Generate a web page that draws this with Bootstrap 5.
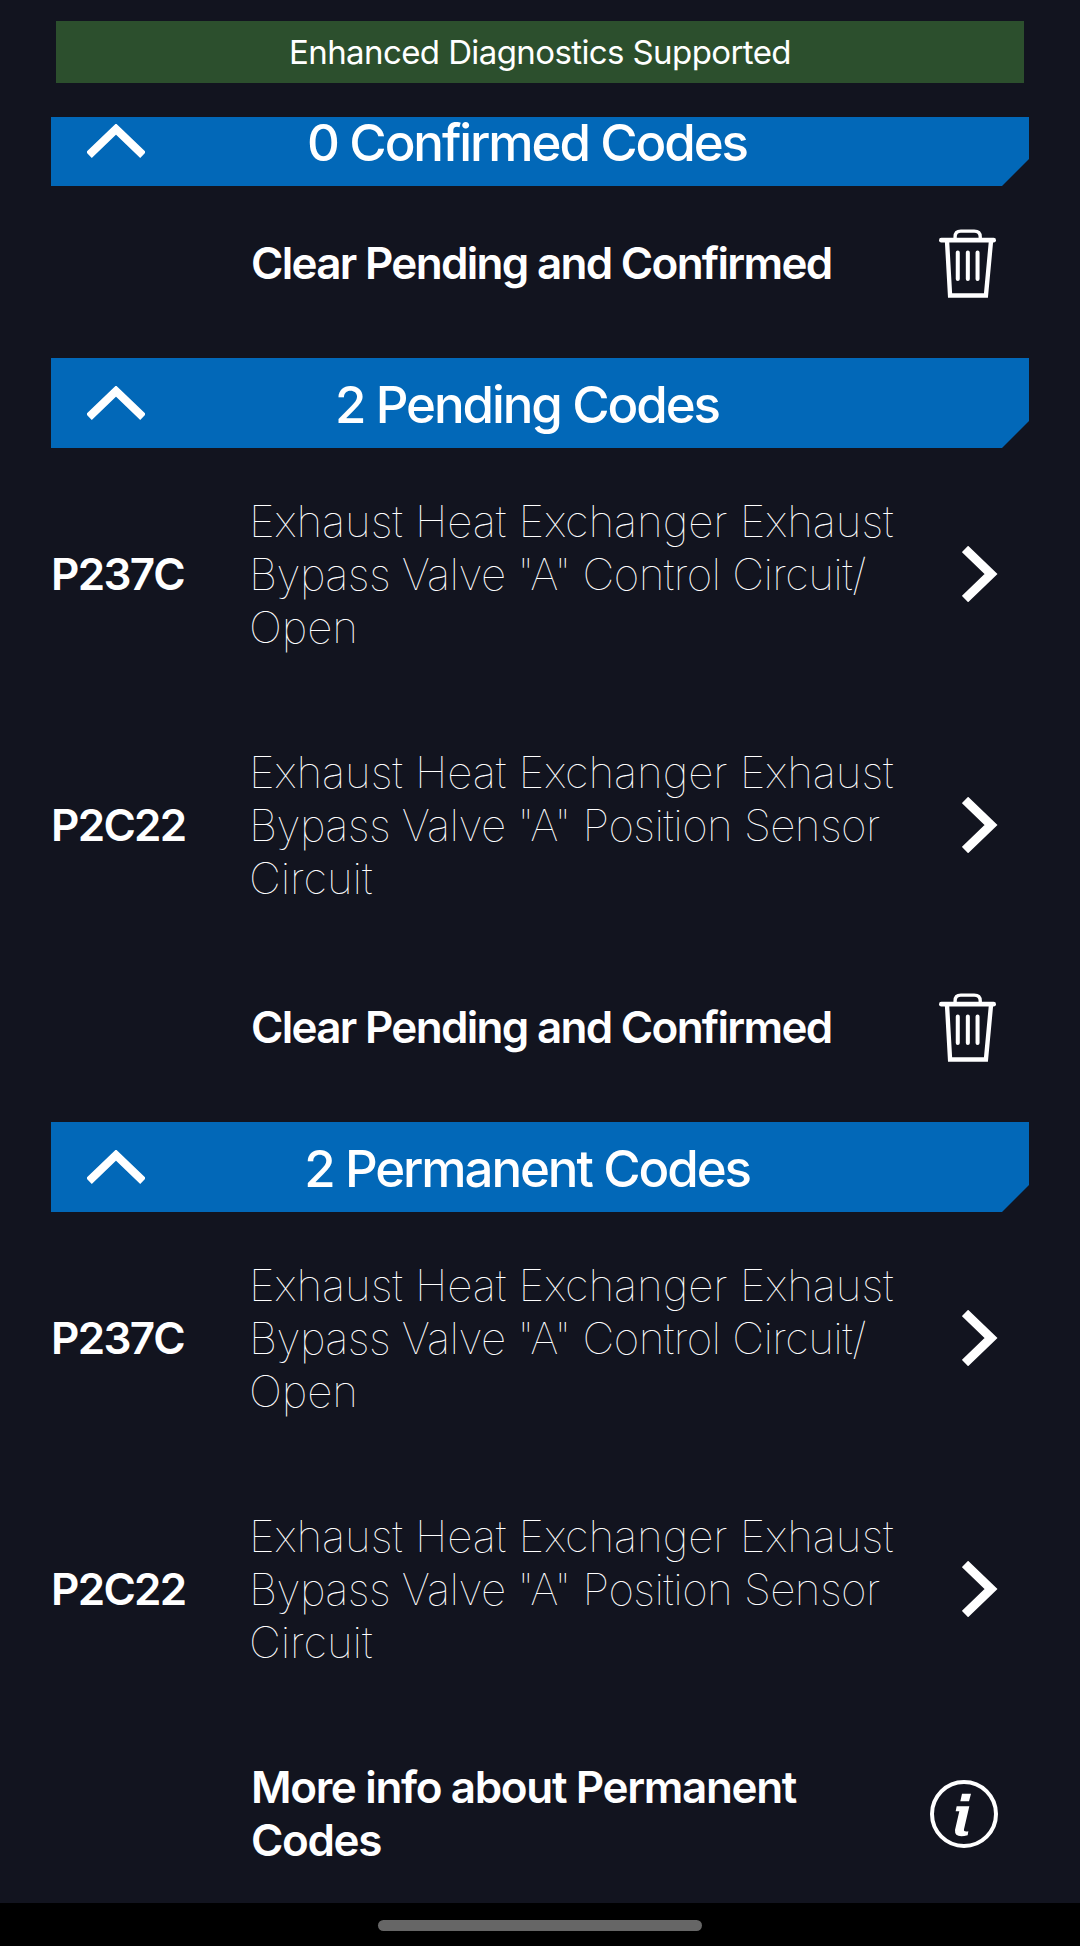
<!DOCTYPE html>
<html lang="en">
<head>
  <meta charset="UTF-8" />
  <meta name="viewport" content="width=device-width, initial-scale=1" />
  <title>Trouble Codes</title>
  <link href="https://cdn.jsdelivr.net/npm/bootstrap@5.3.0/dist/css/bootstrap.min.css" rel="stylesheet" />
  <style>
    body {
      background: #12141f;
      color: #fff;
      font-family: Inter, Roboto, "Liberation Sans", sans-serif;
      height: 1946px;
      overflow: hidden;
    }
    .screen-body {
      height: 1903px;
      padding-top: 21px;
      overflow: hidden;
    }
    .status-banner {
      background: #2c4f2d;
      height: 62px;
      margin: 0 56px 34px;
      padding-top: 2px;
      font-size: 33px;
      font-weight: 400;
      letter-spacing: -0.6px;
    }
    .section-band {
      background: #0268b8;
      height: 90px;
      margin: 0 51px;
      padding: 0 120px 0 36px;
      clip-path: polygon(0 0, 100% 0, 100% calc(100% - 27px), calc(100% - 27px) 100%, 0 100%);
    }
    /* first band is scrolled up under the banner */
    .section-band.band-clipped {
      height: 69px;
      padding-bottom: 21px;
    }
    .band-title {
      padding-top: 3px;
      font-size: 51px;
      font-weight: 550;
      line-height: 42px;
      letter-spacing: -2.1px;
    }
    .code-row {
      margin: 0 82px 0 51px;
      padding: 46px 0;
    }
    .code-name {
      width: 200px;
      font-size: 44px;
      font-weight: 600;
      letter-spacing: -1.7px;
    }
    .code-desc {
      width: 680px;
      padding-top: 1px;
      margin: 0 0 -1px -2px;
      font-size: 44px;
      font-weight: 100;
      line-height: 53px;
      letter-spacing: -0.1px;
    }
    .desc-tight {
      letter-spacing: -0.6px;
    }
    .action-row {
      margin: 0 82px 0 251px;
      font-size: 44px;
      font-weight: 600;
      line-height: 53px;
      letter-spacing: -1.7px;
    }
    .action-clear {
      height: 172px;
      padding-bottom: 18px;
    }
    .action-info {
      padding-top: 47px;
      letter-spacing: -1.35px;
    }
    .action-text {
      width: 600px;
    }
    .trash-icon {
      margin-right: 2px;
    }
    .home-bar {
      background: #000;
      height: 43px;
      padding-top: 17px;
    }
    .home-pill {
      background: #666;
      width: 324px;
      height: 11px;
      border-radius: 6px;
    }
  </style>
</head>
<body>
  <!-- shared icons -->
  <svg class="d-none">
    <defs>
      <g id="chevron-right">
        <polyline points="3,3 29,28 3,53" fill="none" stroke="#fff" stroke-width="9" />
      </g>
      <g id="chevron-up">
        <polyline points="2,31 29,5 56,31" fill="none" stroke="#fff" stroke-width="8" />
      </g>
      <g id="trash" fill="none" stroke="#fff">
        <path d="M165 84 V78 Q165 61 182 61 H222 Q240 61 240 78 V84" stroke-width="10" />
        <path d="M124 88 H280" stroke-width="14" stroke-linecap="round" />
        <path d="M141 92 L150 253 H257 L272 92" stroke-width="13" />
        <path d="M173 125 V204 M203 125 V204 M232 125 V204" stroke-width="12" stroke-linecap="round" />
      </g>
      <g id="info">
        <circle cx="192" cy="188" r="96" fill="none" stroke="#fff" stroke-width="12" />
        <path fill="#fff" d="M186 127 H213 L207 150 H181 Z M170 165 H208 L192 234 Q190 243 205 240 L203 252 Q163 262 165 236 L178 180 H167 Z" />
      </g>
    </defs>
  </svg>

  <div class="screen-body">
    <div class="status-banner d-flex align-items-center justify-content-center">Enhanced Diagnostics Supported</div>

    <div class="section-band band-clipped d-flex align-items-center">
      <svg width="58" height="34" viewBox="0 0 58 34"><use href="#chevron-up" /></svg>
      <div class="band-title flex-grow-1 text-center">0 Confirmed Codes</div>
    </div>
    <div class="action-row action-clear d-flex align-items-center">
      <div class="action-text">Clear Pending and Confirmed</div>
      <svg class="trash-icon ms-auto" width="57" height="69" viewBox="117 55 170 205"><use href="#trash" /></svg>
    </div>

    <div class="section-band d-flex align-items-center">
      <svg width="58" height="34" viewBox="0 0 58 34"><use href="#chevron-up" /></svg>
      <div class="band-title flex-grow-1 text-center">2 Pending Codes</div>
    </div>
    <div class="code-row d-flex align-items-center">
      <div class="code-name">P237C</div>
      <div class="code-desc">
        <div>Exhaust Heat Exchanger Exhaust</div>
        <div class="desc-tight">Bypass Valve "A" Control Circuit/</div>
        <div>Open</div>
      </div>
      <svg class="ms-auto" width="36" height="56" viewBox="0 0 36 56"><use href="#chevron-right" /></svg>
    </div>
    <div class="code-row d-flex align-items-center">
      <div class="code-name">P2C22</div>
      <div class="code-desc">
        <div>Exhaust Heat Exchanger Exhaust</div>
        <div class="desc-tight">Bypass Valve "A" Position Sensor</div>
        <div>Circuit</div>
      </div>
      <svg class="ms-auto" width="36" height="56" viewBox="0 0 36 56"><use href="#chevron-right" /></svg>
    </div>
    <div class="action-row action-clear d-flex align-items-center">
      <div class="action-text">Clear Pending and Confirmed</div>
      <svg class="trash-icon ms-auto" width="57" height="69" viewBox="117 55 170 205"><use href="#trash" /></svg>
    </div>

    <div class="section-band d-flex align-items-center">
      <svg width="58" height="34" viewBox="0 0 58 34"><use href="#chevron-up" /></svg>
      <div class="band-title flex-grow-1 text-center">2 Permanent Codes</div>
    </div>
    <div class="code-row d-flex align-items-center">
      <div class="code-name">P237C</div>
      <div class="code-desc">
        <div>Exhaust Heat Exchanger Exhaust</div>
        <div class="desc-tight">Bypass Valve "A" Control Circuit/</div>
        <div>Open</div>
      </div>
      <svg class="ms-auto" width="36" height="56" viewBox="0 0 36 56"><use href="#chevron-right" /></svg>
    </div>
    <div class="code-row d-flex align-items-center">
      <div class="code-name">P2C22</div>
      <div class="code-desc">
        <div>Exhaust Heat Exchanger Exhaust</div>
        <div class="desc-tight">Bypass Valve "A" Position Sensor</div>
        <div>Circuit</div>
      </div>
      <svg class="ms-auto" width="36" height="56" viewBox="0 0 36 56"><use href="#chevron-right" /></svg>
    </div>
    <div class="action-row action-info d-flex align-items-center">
      <div class="action-text">More info about Permanent Codes</div>
      <svg class="ms-auto" width="68" height="68" viewBox="90 86 204 204"><use href="#info" /></svg>
    </div>
  </div>

  <div class="home-bar d-flex justify-content-center">
    <div class="home-pill"></div>
  </div>

  <script src="https://cdn.jsdelivr.net/npm/bootstrap@5.3.0/dist/js/bootstrap.bundle.min.js"></script>
</body>
</html>
